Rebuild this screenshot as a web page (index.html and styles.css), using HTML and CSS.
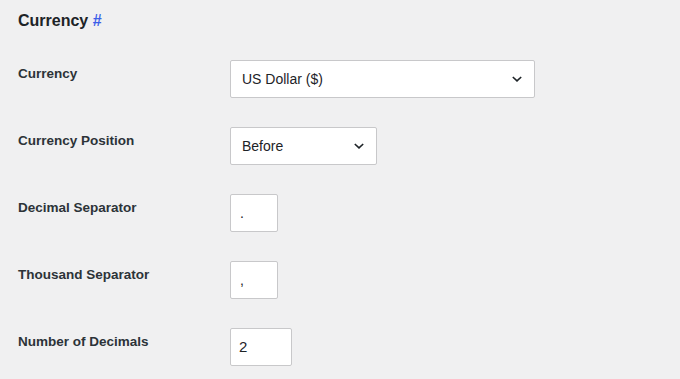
FILE: index.html
```html
<!DOCTYPE html>
<html>
<head>
<meta charset="utf-8">
<link rel="stylesheet" href="styles.css">
</head>
<body>
<div class="page">
  <h2 class="title">Currency <a class="anchor" href="#">#</a></h2>
  <div class="form">
    <div class="row">
      <div class="label">Currency</div>
      <div class="field select wide">US Dollar ($)
        <svg class="chev" width="12" height="8" viewBox="0 0 12 8"><path d="M1.8 2 L6 5.8 L10.2 2" fill="none" stroke="#1d2327" stroke-width="1.6"/></svg>
      </div>
    </div>
    <div class="row">
      <div class="label">Currency Position</div>
      <div class="field select mid">Before
        <svg class="chev" width="12" height="8" viewBox="0 0 12 8"><path d="M1.8 2 L6 5.8 L10.2 2" fill="none" stroke="#1d2327" stroke-width="1.6"/></svg>
      </div>
    </div>
    <div class="row">
      <div class="label">Decimal Separator</div>
      <div class="field small">.</div>
    </div>
    <div class="row">
      <div class="label">Thousand Separator</div>
      <div class="field small">,</div>
    </div>
    <div class="row">
      <div class="label">Number of Decimals</div>
      <div class="field num">2</div>
    </div>
  </div>
</div>
</body>
</html>
```
FILE: styles.css
```css
html, body {
  margin: 0;
  padding: 0;
  background: #f0f0f1;
}
body {
  font-family: "Liberation Sans", Arial, sans-serif;
  color: #1d2327;
}
.page {
  padding: 10px 18px 0 18px;
}
.title {
  margin: 0;
  font-size: 16px;
  font-weight: 600;
  line-height: 22px;
  color: #1d2327;
}
.anchor {
  color: #3c5fe8;
  text-decoration: none;
}
.form {
  display: flex;
  flex-direction: column;
  gap: 29px;
  margin-top: 28px;
}
.row {
  display: grid;
  grid-template-columns: 212px auto;
  align-items: start;
}
.label {
  font-size: 13.5px;
  font-weight: 600;
  line-height: 18px;
  padding-top: 5px;
  color: #2c3338;
}
.field {
  box-sizing: border-box;
  height: 38px;
  background: #fff;
  border: 1px solid #c8c8ca;
  border-radius: 2px;
  font-size: 14px;
  line-height: 36px;
  padding: 0 11px;
  display: flex;
  align-items: center;
  justify-content: space-between;
}
.wide { width: 305px; }
.mid { width: 147px; }
.small { width: 48px; padding-left: 9px; }
.num { width: 62px; padding-left: 8px; font-size: 15px; }
.chev { flex: none; }
```
